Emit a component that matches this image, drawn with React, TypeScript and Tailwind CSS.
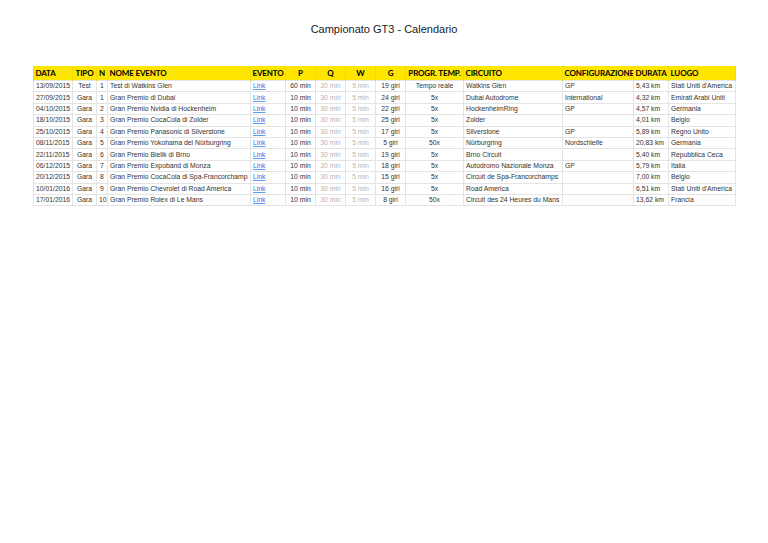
const widths = [39, 24, 11, 143, 35, 30, 30, 30, 30, 58, 99, 71, 35, 67];
const aligns = ["l", "c", "c", "l", "l", "c", "c", "c", "c", "c", "l", "l", "l", "l"];
const header = ["DATA", "TIPO", "N", "NOME EVENTO", "EVENTO", "P", "Q", "W", "G", "PROGR. TEMP.", "CIRCUITO", "CONFIGURAZIONE", "DURATA", "LUOGO"];
const rows = [
  ["13/09/2015", "Test", "1", "Test di Watkins Glen", "60 min", "19 giri", "Tempo reale", "Watkins Glen", "GP", "5,43 km", "Stati Uniti d'America"],
  ["27/09/2015", "Gara", "1", "Gran Premio di Dubai", "10 min", "24 giri", "5x", "Dubai Autodrome", "International", "4,32 km", "Emirati Arabi Uniti"],
  ["04/10/2015", "Gara", "2", "Gran Premio Nvidia di Hockenheim", "10 min", "22 giri", "5x", "HockenheimRing", "GP", "4,57 km", "Germania"],
  ["18/10/2015", "Gara", "3", "Gran Premio CocaCola di Zolder", "10 min", "25 giri", "5x", "Zolder", "", "4,01 km", "Belgio"],
  ["25/10/2015", "Gara", "4", "Gran Premio Panasonic di Silverstone", "10 min", "17 giri", "5x", "Silverstone", "GP", "5,89 km", "Regno Unito"],
  ["08/11/2015", "Gara", "5", "Gran Premio Yokohama del Nürburgring", "10 min", "5 giri", "50x", "Nürburgring", "Nordschleife", "20,83 km", "Germania"],
  ["22/11/2015", "Gara", "6", "Gran Premio Bielik di Brno", "10 min", "19 giri", "5x", "Brno Circuit", "", "5,40 km", "Repubblica Ceca"],
  ["06/12/2015", "Gara", "7", "Gran Premio Expoband di Monza", "10 min", "18 giri", "5x", "Autodromo Nazionale Monza", "GP", "5,79 km", "Italia"],
  ["20/12/2015", "Gara", "8", "Gran Premio CocaCola di Spa-Francorchamp", "10 min", "15 giri", "5x", "Circuit de Spa-Francorchamps", "", "7,00 km", "Belgio"],
  ["10/01/2016", "Gara", "9", "Gran Premio Chevrolet di Road America", "10 min", "16 giri", "5x", "Road America", "", "6,51 km", "Stati Uniti d'America"],
  ["17/01/2016", "Gara", "10", "Gran Premio Rolex di Le Mans", "10 min", "8 giri", "50x", "Circuit des 24 Heures du Mans", "", "13,62 km", "Francia"],
];
const cell = "h-[11.4px] border border-[#e4e4e4] p-0 px-[2px] leading-[10px] overflow-hidden whitespace-nowrap";

export default function App() {
  return (
    <div className="h-[543px] w-[768px] overflow-hidden bg-white font-['Liberation_Sans',Arial,sans-serif] text-[#333]">
      <h1 className="pt-[22px] text-center text-[11px] font-normal leading-[15px] text-[#222]">Campionato GT3 - Calendario</h1>
      <div className="px-[33px] pt-[29px]">
        <table className="w-[702px] table-fixed border-collapse text-[6.8px]">
          <colgroup>
            {widths.map((w, i) => <col key={i} style={{ width: w }} />)}
          </colgroup>
          <thead>
            <tr className="h-[14px] bg-[#ffe600]">
              {header.map((h, i) => (
                <th key={h} className={`overflow-hidden whitespace-nowrap border-x border-[#f0dc00] p-0 font-['Lato',sans-serif] text-[8px] font-bold leading-[14px] tracking-[-0.15px] text-black ${aligns[i] === "c" ? "text-center" : "pl-[1.5px] text-left"}`}>{h}</th>
              ))}
            </tr>
          </thead>
          <tbody>
            {rows.map((r) => (
              <tr key={r[0]}>
                <td className={cell}>{r[0]}</td>
                <td className={`${cell} text-center`}>{r[1]}</td>
                <td className={`${cell} text-center`}>{r[2]}</td>
                <td className={cell}>{r[3]}</td>
                <td className={`${cell} text-[#1f74e8] underline decoration-[#5b9bf0]`}>Link</td>
                <td className={`${cell} text-center`}>{r[4]}</td>
                <td className={`${cell} text-center text-[#b5b5b5]`}>30 min</td>
                <td className={`${cell} text-center text-[#b5b5b5]`}>5 min</td>
                <td className={`${cell} text-center`}>{r[5]}</td>
                <td className={`${cell} text-center`}>{r[6]}</td>
                <td className={cell}>{r[7]}</td>
                <td className={cell}>{r[8]}</td>
                <td className={cell}>{r[9]}</td>
                <td className={cell}>{r[10]}</td>
              </tr>
            ))}
          </tbody>
        </table>
      </div>
    </div>
  );
}
